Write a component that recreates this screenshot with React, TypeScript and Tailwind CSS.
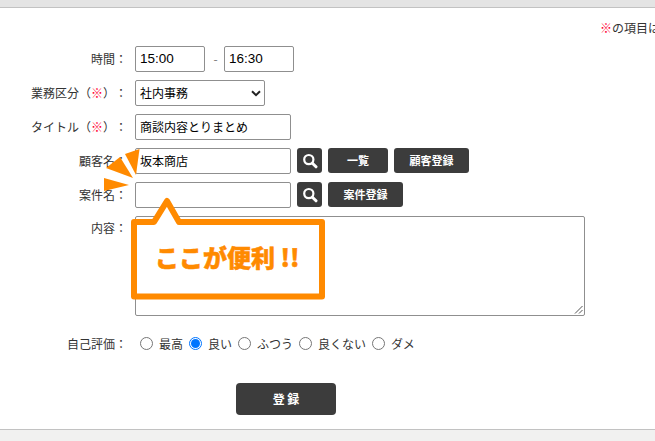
const FONT = 'font-["Noto_Sans_CJK_JP",sans-serif]';

function Label({ children }: { children: React.ReactNode }) {
  return (
    <div className="w-[127px] shrink-0 text-right text-[12px] leading-[18px] text-[#333] [text-spacing-trim:space-all]">
      {children}：
    </div>
  );
}

function Req() {
  return (
    <>
      （<span className="text-[#ff0033]">※</span>）
    </>
  );
}

function TextBox({ value, w, latin }: { value: string; w: string; latin?: boolean }) {
  return (
    <div
      className={`${w} flex h-[26px] items-center rounded-[2px] border border-[#8f8f8f] bg-white px-[4px] text-black ${
        latin ? 'font-["Liberation_Sans",sans-serif] text-[13.5px]' : "text-[12px]"
      }`}
    >
      {value}
    </div>
  );
}

function Search() {
  return (
    <div className="flex h-[25px] w-[25px] items-center justify-center rounded-[3px] bg-[#3c3c3c]">
      <svg width="16" height="16" viewBox="0 0 16 16" fill="none" stroke="white" strokeLinecap="round">
        <circle cx="6.8" cy="6.6" r="4.6" strokeWidth="2.2" />
        <path d="M10.4 10.2 L14 13.8" strokeWidth="3" />
      </svg>
    </div>
  );
}

function Btn({ children, w }: { children: React.ReactNode; w: string }) {
  return (
    <div className={`${w} flex h-[25px] items-center justify-center rounded-[3px] bg-[#3c3c3c] text-[11px] font-bold text-white`}>
      {children}
    </div>
  );
}

function Radio({ on, label }: { on?: boolean; label: string }) {
  return (
    <div className="flex items-center">
      <span className={`mb-[2px] flex h-[13px] w-[13px] items-center justify-center rounded-full border bg-white ${on ? "border-[#0075ff]" : "border-[#767676]"}`}>
        {on && <span className="h-[9px] w-[9px] rounded-full bg-[#0075ff]" />}
      </span>
      <span className="ml-[6px] text-[12px] text-[#333]">{label}</span>
    </div>
  );
}

export default function App() {
  return (
    <div className={`${FONT} relative flex h-[441px] w-[655px] flex-col overflow-hidden bg-white`}>
      <div className="h-[8px] shrink-0 border-b border-[#c2c2c2] bg-[#e4e4e4]" />
      <div className="flex h-[38px] shrink-0 justify-start whitespace-nowrap pl-[600px] pt-[11px] text-[12px] leading-[18px] text-[#333]">
        <span className="text-[#ff0033]">※</span>の項目は必須です
      </div>

      <div className="flex flex-col gap-[8px]">
        <div className="flex items-center">
          <Label>時間</Label>
          <div className="ml-[8px] flex items-center">
            <TextBox value="15:00" w="w-[70px]" latin />
            <span className="mx-[8.5px] w-[2px] text-[12px] text-[#777]">-</span>
            <TextBox value="16:30" w="w-[70px]" latin />
          </div>
        </div>
        <div className="flex items-center">
          <Label>
            業務区分
            <Req />
          </Label>
          <div className="ml-[8px] flex h-[26px] w-[130px] items-center justify-between rounded-[2px] border border-[#8f8f8f] bg-white pl-[4px] pr-[3px] text-[12px] text-black">
            社内事務
            <svg width="10" height="7" viewBox="0 0 10 7" fill="none" stroke="#222" strokeWidth="2">
              <path d="M1 1.2 L5 5.2 L9 1.2" />
            </svg>
          </div>
        </div>
        <div className="flex items-center">
          <Label>
            タイトル
            <Req />
          </Label>
          <div className="ml-[8px]">
            <TextBox value="商談内容とりまとめ" w="w-[156px]" />
          </div>
        </div>
        <div className="flex items-center">
          <Label>顧客名</Label>
          <div className="ml-[8px] flex items-start gap-[6px]">
            <TextBox value="坂本商店" w="w-[156px]" />
            <Search />
            <Btn w="w-[60px]">一覧</Btn>
            <Btn w="w-[75px]">顧客登録</Btn>
          </div>
        </div>
        <div className="flex items-center">
          <Label>案件名</Label>
          <div className="ml-[8px] flex items-start gap-[6px]">
            <TextBox value="" w="w-[156px]" />
            <Search />
            <Btn w="w-[75px]">案件登録</Btn>
          </div>
        </div>
        <div className="flex items-start">
          <div className="pt-[3px]">
            <Label>内容</Label>
          </div>
          <div className="relative ml-[8px] h-[100px] w-[450px] rounded-[2px] border border-[#8f8f8f] bg-white">
            <svg className="absolute bottom-[1px] right-[1px]" width="9" height="9" viewBox="0 0 9 9" stroke="#555" strokeWidth="1">
              <path d="M1 8.5 L8.5 1 M5 8.5 L8.5 5" />
            </svg>
          </div>
        </div>
      </div>

      <div className="mt-[19px] flex h-[18px] items-center">
        <Label>自己評価</Label>
        <div className="ml-[13px] flex items-center gap-[6px]">
          <Radio label="最高" />
          <Radio on label="良い" />
          <Radio label="ふつう" />
          <Radio label="良くない" />
          <Radio label="ダメ" />
        </div>
      </div>

      <div className="mt-[30px] flex justify-center pr-[83px]">
        <div className="flex h-[32px] w-[100px] items-center justify-center rounded-[4px] bg-[#3c3c3c] text-[12px] font-bold text-white">
          登 録
        </div>
      </div>

      <div className="mt-auto h-[12px] shrink-0 border-t border-[#c2c2c2] bg-[#f1f1f0]" />

      {/* Annotation overlay */}
      <svg className="pointer-events-none absolute left-0 top-0" width="655" height="441" viewBox="0 0 655 441">
        <path d="M125 154 L139.5 149 L136 175 Z" fill="#ff8a00" />
        <path d="M106 168 L120 157 L133 178 Z" fill="#ff8a00" />
        <path d="M104 178 L129 185 L104 191 Z" fill="#ff8a00" />
        <path
          d="M134 222 L154 222 L167 201 L179 222 L322 222 L322 296.5 L134 296.5 Z"
          fill="white"
          stroke="#ff8a00"
          strokeWidth="6"
          strokeLinejoin="round"
        />
      </svg>
      <div className="absolute left-[155px] top-[239px] whitespace-nowrap text-[24px] font-black leading-[36px] text-[#ff8a00] [-webkit-text-stroke:0.5px_#ff8a00]">
        ここが便利 !!
      </div>
    </div>
  );
}
